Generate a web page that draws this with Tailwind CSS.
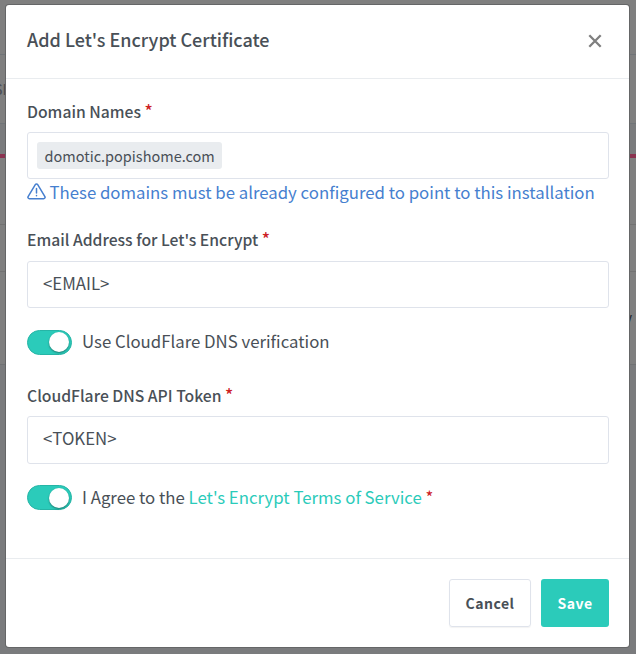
<!DOCTYPE html>
<html lang="en">
<head>
<meta charset="utf-8">
<title>Add Let's Encrypt Certificate</title>
<script src="https://cdn.jsdelivr.net/npm/@tailwindcss/browser@4"></script>
</head>
<body class="relative h-[654px] w-[636px] overflow-hidden bg-[#7a7b7d] font-['Noto_Sans_CJK_SC','Source_Sans_Pro',sans-serif] text-[#495057]">
  <!-- Dimmed page behind the dialog -->
  <div class="absolute inset-0 flex flex-col">
    <div class="h-[54px] bg-[#7f7f7f]"></div>
    <div class="flex h-[70px] items-center border-y border-[#707478] bg-[#7f7f7f] text-[14px] font-medium text-[#4d4f55]"><span class="-ml-[6px]">SE</span></div>
    <div class="h-[30px] bg-[#7a7b7d]"></div>
    <div class="h-1 bg-[#8b3350]"></div>
    <div class="h-[67px] border-b border-[#727272] bg-[#7f7f7f]"></div>
    <div class="h-[47px] border-b border-[#727272] bg-[#7f7f7f]"></div>
    <div class="flex h-[93px] items-center justify-end border-b border-[#707274] bg-[#7f7f7f] text-[15px] text-[#25282c]"><span class="mr-[4px]">y</span></div>
  </div>

  <!-- Dialog -->
  <div class="absolute left-[6px] top-[5px] flex h-[642px] w-[623px] flex-col rounded-[3px] bg-white shadow-[0_0_0_1px_#656667]">
    <header class="flex h-[74px] shrink-0 items-center justify-between border-b border-[#e9ecef] pb-[2px] pl-[21px] pr-[27px]">
      <h5 class="-mt-[3px] whitespace-nowrap text-[18px] font-medium leading-6"><span>Add Let's Encrypt Certificate</span></h5>
      <svg class="h-[14px] w-[14px]" viewBox="0 0 14 14" fill="none" stroke="#7f7f7f" stroke-width="2.3"><path d="M1.3 1.3 12.7 12.7M12.7 1.3 1.3 12.7"/></svg>
    </header>

    <main class="flex flex-1 flex-col whitespace-nowrap px-[21px] pr-[20px] pt-[20px]">
      <label class="h-6 text-[15.7px] font-medium leading-6"><span>Domain Names</span> <span class="text-[17px] text-[#cd201f]">*</span></label>
      <div class="mt-[9px] flex h-[47px] items-center rounded-[3px] border border-[#dfe3eb] pl-[9px]">
        <span class="flex h-[27px] items-center rounded-[3px] bg-[#e9ecef] px-[7.5px] text-[14.5px]">domotic.popishome.com</span>
      </div>
      <div class="flex h-[26px] items-center gap-[3.5px] text-[16.8px] leading-[26px] text-[#467fcf]">
        <svg class="-mt-[2px] h-[17px] w-[19px]" viewBox="0 0 19 17" fill="none" stroke="#467fcf" stroke-width="1.5" stroke-linecap="round" stroke-linejoin="round"><path d="M8.3 1.6 1.1 13.6a1.4 1.4 0 0 0 1.2 2.1h14.4a1.4 1.4 0 0 0 1.2-2.1L10.7 1.6a1.4 1.4 0 0 0-2.4 0ZM9.5 5.6v4.3M9.5 12.6v.1"/></svg>
        <span>These domains must be already configured to point to this installation</span>
      </div>

      <label class="mt-[22px] h-6 text-[15.7px] font-medium leading-6"><span>Email Address for Let's Encrypt</span> <span class="text-[17px] text-[#cd201f]">*</span></label>
      <div class="mt-[10px] flex h-[47px] items-center rounded-[3px] border border-[#dfe3eb] pb-[2px] pl-[15px] text-[16.8px]"><span>&lt;EMAIL&gt;</span></div>

      <div class="mt-[22px] flex h-[25px] items-center gap-[10px] text-[16.8px]">
        <div class="flex h-[25px] w-[45px] items-center justify-end rounded-full border border-[#26b5a6] bg-[#2bcbba] pr-[2px]"><div class="-mt-px h-[20px] w-[20px] rounded-full bg-white shadow-[0_1px_2px_rgba(0,0,0,0.4)]"></div></div>
        <span class="-mt-[1px]">Use CloudFlare DNS verification</span>
      </div>

      <label class="mt-[28px] h-6 text-[15.7px] font-medium leading-6"><span>CloudFlare DNS API Token</span> <span class="text-[17px] text-[#cd201f]">*</span></label>
      <div class="mt-[9px] flex h-[48px] items-center rounded-[3px] border border-[#dfe3eb] pb-[2px] pl-[15px] text-[16.8px]"><span>&lt;TOKEN&gt;</span></div>

      <div class="mt-[21px] flex h-[25px] items-center gap-[10px] text-[16.8px]">
        <div class="flex h-[25px] w-[45px] items-center justify-end rounded-full border border-[#26b5a6] bg-[#2bcbba] pr-[2px]"><div class="h-[20px] w-[20px] rounded-full bg-white shadow-[0_1px_2px_rgba(0,0,0,0.4)]"></div></div>
        <div><span>I Agree to the</span> <a class="text-[#2bcbba]">Let's Encrypt Terms of Service</a> <span class="text-[#cd201f]">*</span></div>
      </div>
    </main>

    <footer class="flex h-[89px] shrink-0 items-start justify-end gap-[10px] border-t border-[#e9ecef] pr-[20px] pt-[20px] text-[14px] font-bold tracking-[0.5px]">
      <button class="h-[48px] w-[82px] rounded-[3px] border border-[#dfe3eb] shadow-[0_1px_1px_rgba(0,0,0,0.05)]">Cancel</button>
      <button class="h-[48px] w-[68px] rounded-[3px] bg-[#2bcbba] text-white">Save</button>
    </footer>
  </div>
</body>
</html>
